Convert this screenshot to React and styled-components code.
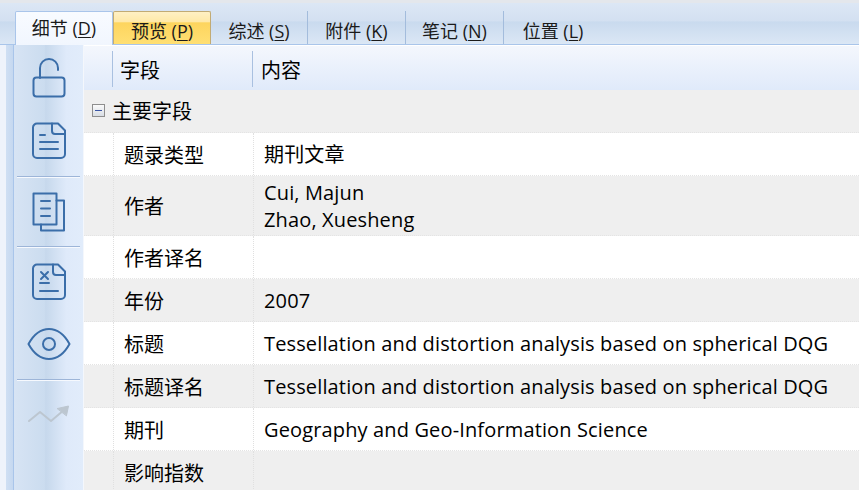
import styled, { createGlobalStyle } from "styled-components";

const GlobalStyle = createGlobalStyle`
  html, body {
    margin: 0;
    padding: 0;
    background: #fff;
  }
  body {
    font-family: "Open Sans", "Noto Sans CJK SC", sans-serif;
    color: #000;
  }
`;

const Page = styled.div`
  width: 859px;
  height: 490px;
  overflow: hidden;
  display: flex;
  flex-direction: column;
  background: #d6e3f3;
`;

const TabBar = styled.div`
  height: 45px;
  flex: none;
  box-sizing: border-box;
  padding: 8px 0 0 15px;
  display: flex;
  align-items: stretch;
  border-top: 3px solid #e4e7ec;
  border-bottom: 1px solid #a9c5ea;
  background: linear-gradient(#dce7f5 0, #d3e0f1 44%, #c9daee 46%, #dbe7f5 100%);
`;

const Tab = styled.div`
  width: ${(p) => p.$width || 98}px;
  flex: none;
  box-sizing: border-box;
  display: flex;
  align-items: center;
  justify-content: center;
  padding-top: ${(p) => (p.$active ? 0 : 4)}px;
  padding-bottom: ${(p) => (p.$active ? 3 : 0)}px;
  font-size: 18px;
  white-space: nowrap;
  color: #1a1a1a;
  border-right: ${(p) => (p.$last ? "none" : "1px solid #a3bcdc")};
  u {
    text-underline-offset: 2px;
  }
  ${(p) =>
    p.$active &&
    `
    background: linear-gradient(#f8fbff, #f1f6fe);
    border: 1px solid #a9c5ea;
    border-bottom: none;
    margin-bottom: -1px;
    border-radius: 2px 2px 0 0;
  `}
  ${(p) =>
    p.$hover &&
    `
    background: linear-gradient(#fff0c4 0, #ffe9a8 30%, #fdd55e 34%, #ffdf73 100%);
    border: 1px solid #c2ab74;
    border-bottom: none;
    border-radius: 2px 2px 0 0;
  `}
`;

const Body = styled.div`
  flex: 1;
  min-height: 0;
  display: flex;
  padding-left: 6px;
  background: #eef3fb;
`;

const Gutter = styled.div`
  width: 7px;
  flex: none;
  background: linear-gradient(90deg, #cfdff3, #c5d8f0);
  border-right: 1px solid #a9c5ea;
`;

const Sidebar = styled.div`
  width: 70px;
  flex: none;
  display: flex;
  flex-direction: column;
  align-items: stretch;
  padding: 9px 3px 0;
  box-sizing: border-box;
  background: linear-gradient(90deg, #d7e4f4 0, #cbdcef 44%, #c6d8ec 46%, #dfeafa 76%, #e1ecfb 100%);
  border-right: 1px solid #f4f7fc;
`;

const ToolButton = styled.div`
  height: ${(p) => p.$height}px;
  flex: none;
  box-sizing: border-box;
  padding-top: ${(p) => p.$top || 0}px;
  padding-bottom: ${(p) => p.$bottom || 0}px;
  display: flex;
  align-items: center;
  justify-content: center;
`;

const ToolRule = styled.div`
  height: 2px;
  flex: none;
  background: linear-gradient(#9db5d8 50%, #f6f9fe 50%);
`;

const Grid = styled.div`
  flex: 1;
  min-width: 0;
  display: flex;
  flex-direction: column;
  background: #fff;
`;

const HeaderRow = styled.div`
  height: 45px;
  flex: none;
  box-sizing: border-box;
  padding: 5px 0 3px;
  display: flex;
  background: linear-gradient(#f4f7fd, #e0eafa);
  border-top: 1px solid #fff;
`;

const HeaderCell = styled.div`
  width: ${(p) => p.$width}px;
  flex: ${(p) => (p.$grow ? 1 : "none")};
  box-sizing: border-box;
  display: flex;
  align-items: center;
  padding-left: ${(p) => p.$pad || 0}px;
  font-size: 20px;
  border-right: ${(p) => (p.$grow ? "none" : "1px solid #a9c0e0")};
`;

const GroupRow = styled.div`
  height: 43px;
  flex: none;
  box-sizing: border-box;
  padding: 0 0 2px 8px;
  display: flex;
  align-items: center;
  gap: 7px;
  font-size: 20px;
  background: #efefef;
  border-bottom: 1px dotted #e4e4e4;
`;

const Collapse = styled.span`
  width: 11px;
  height: 11px;
  flex: none;
  border: 1px solid #8e8e8e;
  background: linear-gradient(#fafafa, #d8dde4);
  display: flex;
  align-items: center;
  justify-content: center;
  &::after {
    content: "";
    width: 7px;
    height: 1px;
    background: #3a55a5;
  }
`;

const Row = styled.div`
  height: ${(p) => p.$height || 43}px;
  flex: none;
  display: flex;
  box-sizing: border-box;
  background: ${(p) => (p.$shaded ? "#efefef" : "#fff")};
  border-bottom: 1px dotted #e4e4e4;
`;

const Spacer = styled.div`
  width: 29px;
  flex: none;
  border-right: 1px dotted #e0e0e0;
`;

const LabelCell = styled.div`
  width: 140px;
  flex: none;
  box-sizing: border-box;
  padding-left: 10px;
  display: flex;
  align-items: center;
  font-size: 20px;
  border-right: 1px dotted #e0e0e0;
`;

const ValueCell = styled.div`
  flex: 1;
  min-width: 0;
  padding-left: 10px;
  display: flex;
  flex-direction: column;
  justify-content: center;
  font-size: 20px;
  letter-spacing: 0.14px;
  line-height: 27px;
  white-space: nowrap;
`;

const Icon = styled.svg`
  fill: none;
  stroke: ${(p) => p.$color || "#3b6ea9"};
  stroke-width: 2;
  stroke-linecap: round;
  stroke-linejoin: round;
`;

const LockIcon = () => (
  <Icon width="34" height="40" viewBox="0 0 34 40">
    <path d="M8 20V10a9 9 0 0 1 18 0v2" />
    <rect x="1.5" y="19.5" width="31" height="19" rx="3" />
  </Icon>
);

const DocIcon = () => (
  <Icon width="34" height="38" viewBox="0 0 34 38">
    <path d="M5 1.5h21l7 7V32a4 4 0 0 1-4 4H5a4 4 0 0 1-4-4V5.500a4 4 0 0 1 4-4z" />
    <path d="M20 1.500V9a3 3 0 0 0 3 3h10" />
    <path d="M8 13h5M8 20h18M8 27h18" />
  </Icon>
);

const CopyIcon = () => (
  <Icon width="34" height="40" viewBox="0 0 34 40" strokeLinecap="butt" strokeLinejoin="miter">
    <rect x="1.5" y="1.5" width="23" height="31" />
    <path d="M24.500 8.500h7.500v30H9v-6" />
    <path d="M9 9h9M9 16.500h9M9 24h9" />
  </Icon>
);

const DocXIcon = () => (
  <Icon width="34" height="38" viewBox="0 0 34 38">
    <path d="M5 1.500h21l7 7V32a4 4 0 0 1-4 4H5a4 4 0 0 1-4-4V5.500a4 4 0 0 1 4-4z" />
    <path d="M21 1.500V9a3 3 0 0 0 3 3h9" />
    <path d="M9 9l7 7M16 9l-7 7M8 20h9M8 28h18" />
  </Icon>
);

const EyeIcon = () => (
  <Icon width="44" height="34" viewBox="0 0 44 34">
    <path d="M1.500 17C7 7 14 2 22 2s15 5 20.500 15C37 27 30 32 22 32S7 27 1.500 17z" />
    <circle cx="22" cy="17" r="6" />
  </Icon>
);

const TrendIcon = () => (
  <Icon width="42" height="20" viewBox="0 0 42 20" $color="#bcc6d0">
    <path d="M1 16l11-9 11 9 13-11" />
    <path d="M29.500 3.500L40.500 1l-2 9.500z" fill="#bcc6d0" strokeWidth="1" />
  </Icon>
);

const tabs = [
  { label: "细节", key: "D", active: true },
  { label: "预览", key: "P", hover: true },
  { label: "综述", key: "S", width: 97 },
  { label: "附件", key: "K" },
  { label: "笔记", key: "N" },
  { label: "位置", key: "L", last: true },
];

const rows = [
  { label: "题录类型", value: ["期刊文章"] },
  { label: "作者", value: ["Cui, Majun", "Zhao, Xuesheng"], height: 60 },
  { label: "作者译名", value: [] },
  { label: "年份", value: ["2007"] },
  { label: "标题", value: ["Tessellation and distortion analysis based on spherical DQG"] },
  { label: "标题译名", value: ["Tessellation and distortion analysis based on spherical DQG"] },
  { label: "期刊", value: ["Geography and Geo-Information Science"] },
  { label: "影响指数", value: [] },
];

const App = () => (
  <Page>
    <GlobalStyle />
    <TabBar>
      {tabs.map((t) => (
        <Tab key={t.key} $active={t.active} $hover={t.hover} $width={t.width} $last={t.last}>
          <span>
            {t.label} (<u>{t.key}</u>)
          </span>
        </Tab>
      ))}
    </TabBar>
    <Body>
      <Gutter />
      <Sidebar>
        <ToolButton $height={48}>
          <LockIcon />
        </ToolButton>
        <ToolButton $height={74} $top={4}>
          <DocIcon />
        </ToolButton>
        <ToolRule />
        <ToolButton $height={68}>
          <CopyIcon />
        </ToolButton>
        <ToolRule />
        <ToolButton $height={68}>
          <DocXIcon />
        </ToolButton>
        <ToolButton $height={63} $bottom={7}>
          <EyeIcon />
        </ToolButton>
        <ToolRule />
        <ToolButton $height={68}>
          <TrendIcon />
        </ToolButton>
      </Sidebar>
      <Grid>
        <HeaderRow>
          <HeaderCell $width={29} />
          <HeaderCell $width={140} $pad={7}>
            字段
          </HeaderCell>
          <HeaderCell $grow $pad={8}>
            内容
          </HeaderCell>
        </HeaderRow>
        <GroupRow>
          <Collapse />
          主要字段
        </GroupRow>
        {rows.map((r, i) => (
          <Row key={r.label} $height={r.height} $shaded={i % 2 === 1}>
            <Spacer />
            <LabelCell>{r.label}</LabelCell>
            <ValueCell>
              {r.value.map((v) => (
                <div key={v}>{v}</div>
              ))}
            </ValueCell>
          </Row>
        ))}
      </Grid>
    </Body>
  </Page>
);

export default App;
